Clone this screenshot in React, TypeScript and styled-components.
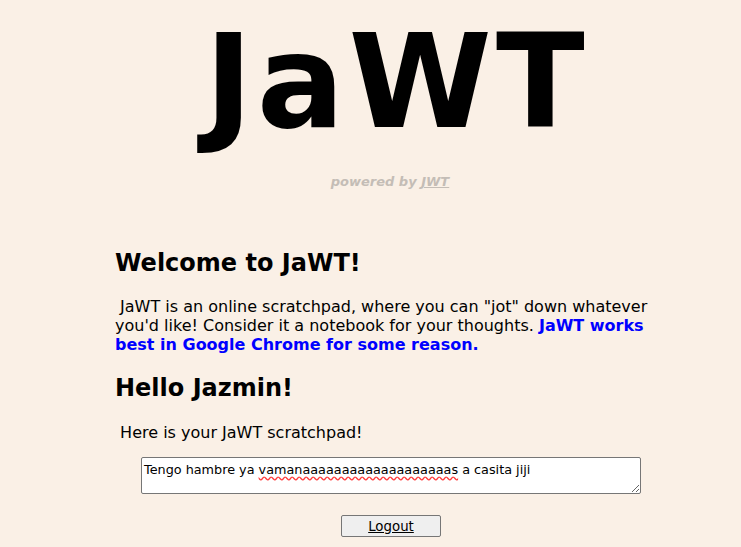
import React from "react";
import styled, { createGlobalStyle } from "styled-components";

const Global = createGlobalStyle`
  html, body {
    margin: 0;
    padding: 0;
    background: #faf0e6;
    font-family: "DejaVu Sans", Verdana, sans-serif;
    color: #000;
  }
`;

const Page = styled.div`
  padding-top: 6px;
`;

const Title = styled.h1`
  margin: 0;
  text-align: center;
  font-size: 130px;
  font-weight: bold;
  line-height: normal;
  letter-spacing: 4px;
  padding-left: 52px;
`;

const Powered = styled.p`
  margin: 16px 0 0;
  text-align: center;
  font-size: 13px;
  font-weight: bold;
  font-style: italic;
  color: #c4bdb6;
  padding-left: 39px;
  a {
    color: inherit;
    text-decoration: underline;
  }
`;

const Content = styled.main`
  margin: 60px 0 0 115px;
  width: 552px;
`;

const Heading = styled.h2`
  margin: 0;
  font-size: 24px;
  font-weight: bold;
  line-height: normal;
`;

const Text = styled.p<{ $gapTop: number; $gapBottom: number }>`
  margin: ${(p) => p.$gapTop}px 0 ${(p) => p.$gapBottom}px;
  font-size: 16px;
  line-height: 19px;
  white-space: pre-wrap;
`;

const Highlight = styled.strong`
  color: #0000ff;
`;

const Center = styled.div`
  display: flex;
  flex-direction: column;
  align-items: center;
  gap: 21px;
`;

const Pad = styled.div`
  width: 500px;
  height: 37px;
  box-sizing: border-box;
  border: 1px solid #767676;
  border-radius: 2px;
  background: #fff;
  padding: 4px 2px 2px;
  font-size: 12.8px;
  line-height: normal;
  resize: vertical;
  overflow: auto;
  white-space: pre-wrap;
  outline: none;
`;

const Misspelled = styled.span`
  text-decoration: underline wavy #ff3b3b;
  text-underline-offset: 2px;
`;

const Button = styled.button`
  width: 100px;
  height: 22px;
  box-sizing: border-box;
  border: 1px solid #767676;
  border-radius: 2px;
  background: #efefef;
  font-family: "DejaVu Sans", Verdana, sans-serif;
  font-size: 13.33px;
  color: #000;
  text-decoration: underline;
  padding: 0;
  cursor: pointer;
`;

export default function App() {
  return (
    <Page>
      <Global />
      <Title>JaWT</Title>
      <Powered>
        powered by <a href="#">JWT</a>
      </Powered>
      <Content>
        <Heading>Welcome to JaWT!</Heading>
        <Text $gapTop={20} $gapBottom={20}>
          {" JaWT is an online scratchpad, where you can \"jot\" down whatever you'd like! Consider it a notebook for your thoughts. "}
          <Highlight>JaWT works best in Google Chrome for some reason.</Highlight>
        </Text>
        <Heading>Hello Jazmin!</Heading>
        <Text $gapTop={21} $gapBottom={15}>
          {" Here is your JaWT scratchpad!"}
        </Text>
        <Center>
          <Pad role="textbox" aria-multiline="true" contentEditable suppressContentEditableWarning spellCheck={false}>
            Tengo hambre ya <Misspelled>vamanaaaaaaaaaaaaaaaaaaas</Misspelled> a casita jiji
          </Pad>
          <Button>Logout</Button>
        </Center>
      </Content>
    </Page>
  );
}
